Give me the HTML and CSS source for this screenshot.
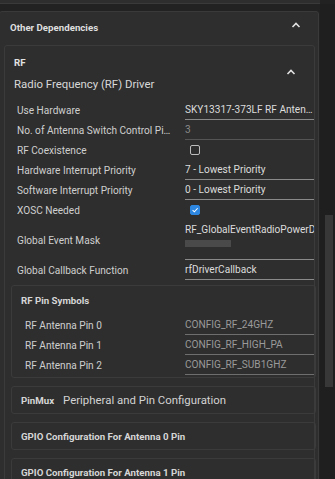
FILE: index.html
```html
<!DOCTYPE html>
<html lang="en">
<head>
  <meta charset="UTF-8" />
  <title>Other Dependencies</title>
  <link rel="stylesheet" href="styles.css">
</head>
<body>
  <div class="prev-panel"></div>
  <div class="layout">
    <div class="content">
      <div class="panel">
        <div class="panel-head">
          <span class="panel-title">Other Dependencies</span>
          <svg class="chev" width="10" height="6" viewBox="0 0 10 6"><path d="M1.5 5 L5 1.5 L8.5 5" fill="none" stroke="#e0e0e0" stroke-width="1.6"/></svg>
        </div>

        <div class="module">
          <div class="module-head">
            <div>
              <div class="module-name">RF</div>
              <div class="module-desc">Radio Frequency (RF) Driver</div>
            </div>
            <svg class="chev" width="10" height="6" viewBox="0 0 10 6"><path d="M1.5 5 L5 1.5 L8.5 5" fill="none" stroke="#e0e0e0" stroke-width="1.6"/></svg>
          </div>

          <div class="row">
            <div class="label">Use Hardware</div>
            <div class="value field">SKY13317-373LF RF Antenna Switch</div>
          </div>
          <div class="row">
            <div class="label">No. of Antenna Switch Control Pins</div>
            <div class="value field disabled">3</div>
          </div>
          <div class="row">
            <div class="label">RF Coexistence</div>
            <div class="value"><span class="check"></span></div>
          </div>
          <div class="row">
            <div class="label">Hardware Interrupt Priority</div>
            <div class="value field">7 - Lowest Priority</div>
          </div>
          <div class="row">
            <div class="label">Software Interrupt Priority</div>
            <div class="value field">0 - Lowest Priority</div>
          </div>
          <div class="row">
            <div class="label">XOSC Needed</div>
            <div class="value">
              <span class="check on"><svg width="10" height="10" viewBox="0 0 10 10"><path d="M2 5.2 L4.2 7.3 L8.3 2.8" fill="none" stroke="#fff" stroke-width="1.3"/></svg></span>
            </div>
          </div>
          <div class="row tall">
            <div class="label">Global Event Mask</div>
            <div class="value multi">
              <div class="mask-item">RF_GlobalEventRadioPowerDown</div>
              <div class="mask-bar"></div>
            </div>
          </div>
          <div class="row">
            <div class="label">Global Callback Function</div>
            <div class="value field">rfDriverCallback</div>
          </div>

          <div class="group">
            <div class="group-title">RF Pin Symbols</div>
            <div class="row pin">
              <div class="label">RF Antenna Pin 0</div>
              <div class="value field muted">CONFIG_RF_24GHZ</div>
            </div>
            <div class="row pin">
              <div class="label">RF Antenna Pin 1</div>
              <div class="value field muted">CONFIG_RF_HIGH_PA</div>
            </div>
            <div class="row pin">
              <div class="label">RF Antenna Pin 2</div>
              <div class="value field muted">CONFIG_RF_SUB1GHZ</div>
            </div>
          </div>

          <div class="group collapsed">
            <span class="group-title">PinMux</span>
            <span class="group-desc">Peripheral and Pin Configuration</span>
          </div>
          <div class="group collapsed">
            <span class="group-title">GPIO Configuration For Antenna 0 Pin</span>
          </div>
          <div class="group collapsed">
            <span class="group-title">GPIO Configuration For Antenna 1 Pin</span>
          </div>
        </div>
      </div>
    </div>
    <div class="scroll-track">
      <div class="scroll-thumb"></div>
    </div>
  </div>
</body>
</html>
```

FILE: styles.css
```css
body {
  margin: 0;
  background-color: #222222;
  font-family: Roboto, "Liberation Sans", sans-serif;
  color: #d4d4d4;
  overflow: hidden;
  height: 479px;
}

.prev-panel {
  width: 320px;
  height: 3px;
  background-color: #2e2e2e;
  border-bottom: 1px solid #3a3a3a;
}

.layout {
  display: flex;
}

.content {
  width: 320px;
  padding-top: 7px;
}

.panel {
  margin-left: -1px;
  width: 318px;
  height: 470px;
  background-color: #2e2e2e;
  border: 1px solid #3a3a3a;
  border-radius: 3px;
  overflow: hidden;
}

.panel-head {
  display: flex;
  justify-content: space-between;
  align-items: center;
  height: 31px;
  padding: 0 17px 2px 10px;
}

.panel-head .chev {
  margin-bottom: 5px;
}

.panel-title {
  font-size: 9.7px;
  font-weight: 700;
  color: #dedede;
}

.chev {
  display: block;
}

.module {
  margin-left: 4px;
  width: 309px;
  border: 1px solid #3b3b3b;
  border-radius: 3px;
  padding-bottom: 10px;
}

.module-head {
  display: flex;
  justify-content: space-between;
  align-items: center;
  padding: 8px 18px 0 9px;
}

.module-name {
  font-size: 9.7px;
  font-weight: 700;
  color: #e2e2e2;
  line-height: 14px;
  margin-top: 2px;
}

.module-desc {
  font-size: 11.4px;
  color: #d8d8d8;
  line-height: 16px;
  margin-top: 6px;
}

.module-head .chev {
  margin-top: -2px;
}

.module-head + .row {
  margin-top: 8px;
}

.row {
  display: flex;
  align-items: center;
  height: 20px;
  font-size: 10.1px;
}

.label {
  box-sizing: border-box;
  width: 167px;
  padding-left: 12px;
  margin-right: 13px;
  white-space: nowrap;
  overflow: hidden;
  text-overflow: ellipsis;
  color: #cfcfcf;
}

.value {
  width: 129px;
  height: 20px;
  display: flex;
  align-items: center;
  white-space: nowrap;
  overflow: hidden;
}

.field {
  border-bottom: 1px solid #8a8a8a;
  box-sizing: border-box;
  padding-top: 1px;
  text-overflow: ellipsis;
  display: block;
  line-height: 17px;
  color: #dcdcdc;
}

.field.disabled {
  color: #8a8a8a;
  border-bottom-color: #555555;
}

.field.muted {
  color: #9a9a9a;
  border-bottom-color: #6e6e6e;
}

.check {
  display: inline-flex;
  align-items: center;
  justify-content: center;
  width: 8px;
  height: 8px;
  margin-left: 5px;
  border: 1.5px solid #bdbdbd;
  border-radius: 2px;
}

.check.on {
  background-color: #2d86e0;
  border-color: #2d86e0;
}

.row.tall {
  height: 40px;
}

.value.multi {
  height: 40px;
  flex-direction: column;
  align-items: flex-start;
  justify-content: flex-start;
  border-bottom: 1px solid #8a8a8a;
  box-sizing: border-box;
}

.mask-item {
  color: #dcdcdc;
  margin-top: 3px;
  line-height: 14px;
  width: 129px;
  overflow: hidden;
  white-space: nowrap;
}

.mask-bar {
  width: 46px;
  height: 7px;
  margin-top: 3px;
  background-color: #4a4a4a;
}

.group {
  margin: 5px -2px 0 6px;
  border: 1px solid #3b3b3b;
  border-radius: 3px;
  padding-bottom: 2px;
}

.group-title {
  font-size: 9.7px;
  font-weight: 700;
  color: #d6d6d6;
}

.group > .group-title {
  display: block;
  padding: 9px 0 0 9px;
  height: 20px;
}

.row.pin .label {
  width: 173px;
  padding-left: 13px;
  margin-right: 0;
}

.group.collapsed {
  display: flex;
  align-items: center;
  height: 26px;
  padding: 0 0 0 9px;
  margin-top: 8px;
}

.group.collapsed .group-title {
  display: inline;
  padding: 0;
  height: auto;
}

.group-desc {
  font-size: 11.4px;
  color: #d2d2d2;
  margin-left: 9px;
}

.scroll-track {
  width: 15px;
  height: 480px;
  background-color: #1f1f1f;
}

.scroll-thumb {
  margin: 211px 0 0 5px;
  width: 8px;
  height: 172px;
  background-color: #383838;
}
```
